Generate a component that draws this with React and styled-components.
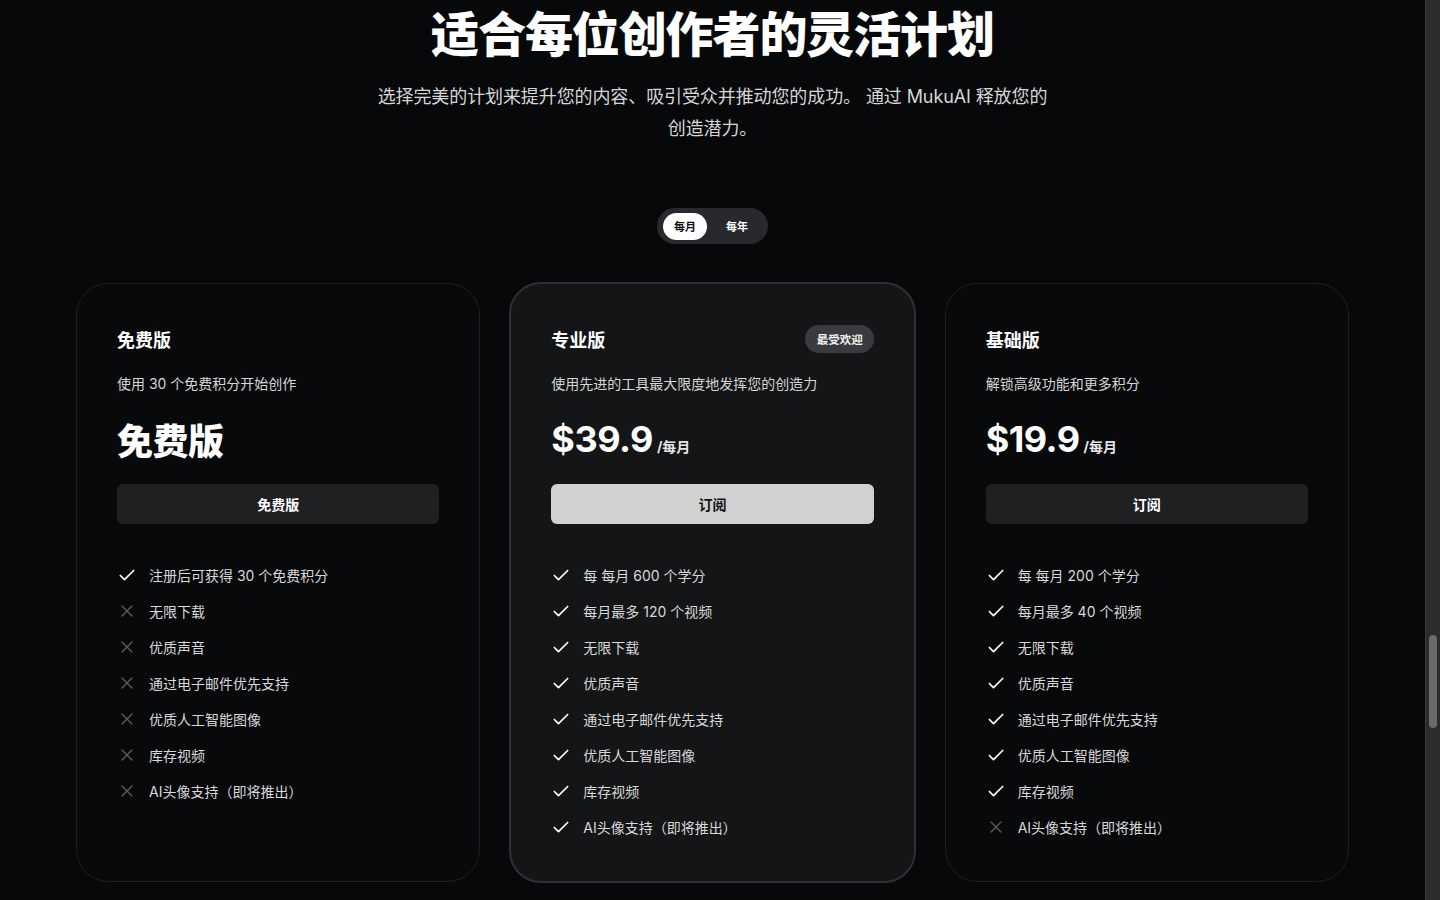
import React, { useState } from 'react'
import styled, { createGlobalStyle, css } from 'styled-components'
import { Check, X } from 'lucide-react'

const GlobalStyle = createGlobalStyle`
    html, body {
        margin: 0;
        padding: 0;
        background: #07080a;
        font-family: Inter, "Noto Sans CJK SC", "Noto Sans", sans-serif;
        color: #fff;
        -webkit-font-smoothing: antialiased;
    }
    * { box-sizing: border-box; }
`

const plans = [
    {
        name: '免费版',
        desc: '使用 30 个免费积分开始创作',
        price: '免费版',
        button: '免费版',
        features: [
            ['注册后可获得 30 个免费积分', true],
            ['无限下载', false],
            ['优质声音', false],
            ['通过电子邮件优先支持', false],
            ['优质人工智能图像', false],
            ['库存视频', false],
            ['AI头像支持（即将推出）', false],
        ],
    },
    {
        name: '专业版',
        desc: '使用先进的工具最大限度地发挥您的创造力',
        price: '$39.9',
        unit: '/每月',
        button: '订阅',
        featured: true,
        features: [
            ['每 每月 600 个学分', true],
            ['每月最多 120 个视频', true],
            ['无限下载', true],
            ['优质声音', true],
            ['通过电子邮件优先支持', true],
            ['优质人工智能图像', true],
            ['库存视频', true],
            ['AI头像支持（即将推出）', true],
        ],
    },
    {
        name: '基础版',
        desc: '解锁高级功能和更多积分',
        price: '$19.9',
        unit: '/每月',
        button: '订阅',
        features: [
            ['每 每月 200 个学分', true],
            ['每月最多 40 个视频', true],
            ['无限下载', true],
            ['优质声音', true],
            ['通过电子邮件优先支持', true],
            ['优质人工智能图像', true],
            ['库存视频', true],
            ['AI头像支持（即将推出）', false],
        ],
    },
]

const App = () => {
    const [period, setPeriod] = useState('month')

    return (
        <Viewport>
            <GlobalStyle />
            <Main>
                <Heading>适合每位创作者的灵活计划</Heading>
                <Subtitle>
                    选择完美的计划来提升您的内容、吸引受众并推动您的成功。 通过 MukuAI 释放您的创造潜力。
                </Subtitle>
                <Toggle>
                    <ToggleOption active={period === 'month'} onClick={() => setPeriod('month')}>
                        每月
                    </ToggleOption>
                    <ToggleOption active={period === 'year'} onClick={() => setPeriod('year')}>
                        每年
                    </ToggleOption>
                </Toggle>
                <Cards>
                    {plans.map((plan) => (
                        <Card key={plan.name} featured={plan.featured}>
                            <CardHeader>
                                <PlanName>{plan.name}</PlanName>
                                {plan.featured && <Badge>最受欢迎</Badge>}
                            </CardHeader>
                            <PlanDesc>{plan.desc}</PlanDesc>
                            <PriceRow>
                                <Price cjk={!plan.unit}>{plan.price}</Price>
                                {plan.unit && <Unit>{plan.unit}</Unit>}
                            </PriceRow>
                            <PlanButton featured={plan.featured}>{plan.button}</PlanButton>
                            <Features>
                                {plan.features.map(([text, ok]) => (
                                    <Feature key={text}>
                                        <IconBox ok={ok}>
                                            {ok ? <Check size={21} strokeWidth={2} /> : <X size={22} strokeWidth={1.6} />}
                                        </IconBox>
                                        {text}
                                    </Feature>
                                ))}
                            </Features>
                        </Card>
                    ))}
                </Cards>
            </Main>
            <ScrollTrack>
                <ScrollThumb />
            </ScrollTrack>
        </Viewport>
    )
}

export default App

const Viewport = styled.div`
    display: flex;
    height: 100vh;
    overflow: hidden;
    background: #07080a;
`
const Main = styled.main`
    flex: 1;
    display: flex;
    flex-direction: column;
    align-items: center;
    padding: 0 76px;
`
const Heading = styled.h1`
    margin: 0;
    font-family: "Noto Sans CJK SC", sans-serif;
    font-size: 48px;
    font-weight: 900;
    line-height: 62px;
    letter-spacing: -1.1px;
    color: #fff;
`
const Subtitle = styled.p`
    margin: 19px 0 0;
    max-width: 680px;
    text-align: center;
    font-family: Inter, "Noto Sans CJK SC", sans-serif;
    font-size: 18px;
    line-height: 32px;
    letter-spacing: -0.1px;
    color: #d6d6d6;
`
const Toggle = styled.div`
    display: flex;
    align-items: center;
    gap: 4px;
    margin-top: 63px;
    padding: 4px 6px;
    height: 36px;
    border-radius: 18px;
    background: #28292c;
`
const ToggleOption = styled.button`
    border: 0;
    height: 27px;
    padding: 0 11px 1px;
    border-radius: 14px;
    font-family: "Noto Sans CJK SC", sans-serif;
    font-size: 11px;
    font-weight: 700;
    cursor: pointer;
    ${({ active }) =>
        active
            ? css`
                  background: #fff;
                  color: #111;
              `
            : css`
                  background: transparent;
                  color: #fff;
                  padding: 0 14px 1px 15px;
              `}
`
const Cards = styled.div`
    display: grid;
    grid-template-columns: repeat(3, 1fr);
    gap: 30px;
    width: 100%;
    max-width: 1273px;
    margin-top: 39px;
`
const Card = styled.div`
    display: flex;
    flex-direction: column;
    padding: 41px 40px 44px;
    border-radius: 32px;
    border: 1px solid #1e1f22;
    background: #08090b;
    ${({ featured }) =>
        featured &&
        css`
            background: #141517;
            border: 2px solid #2f3033;
            margin: -1px -1px;
            padding: 41px 40px 44px;
        `}
`
const CardHeader = styled.div`
    display: flex;
    align-items: center;
    justify-content: space-between;
    height: 28px;
`
const PlanName = styled.h3`
    margin: 0;
    font-family: "Noto Sans CJK SC", sans-serif;
    font-size: 18px;
    font-weight: 700;
    color: #fff;
`
const Badge = styled.span`
    display: inline-flex;
    align-items: center;
    height: 28px;
    padding: 0 11px 0 12px;
    border-radius: 14px;
    background: #3a3b3e;
    font-family: "Noto Sans CJK SC", sans-serif;
    font-size: 11.5px;
    font-weight: 700;
    color: #f2f2f2;
`
const PlanDesc = styled.p`
    margin: 21px 0 0;
    font-size: 14px;
    line-height: 20px;
    color: #d6d6d6;
`
const PriceRow = styled.div`
    display: flex;
    align-items: baseline;
    gap: 4px;
    margin-top: 23px;
    height: 44px;
`
const Price = styled.span`
    font-family: ${({ cjk }) => (cjk ? '"Noto Sans CJK SC", sans-serif' : 'Inter, sans-serif')};
    font-size: 36px;
    font-weight: ${({ cjk }) => (cjk ? 900 : 700)};
    line-height: 44px;
    letter-spacing: -0.5px;
    color: #fff;
`
const Unit = styled.span`
    font-family: Inter, "Noto Sans CJK SC", sans-serif;
    font-size: 14px;
    font-weight: 700;
    color: #e4e4e4;
`
const PlanButton = styled.button`
    margin-top: 23px;
    height: 40px;
    width: 100%;
    border: 0;
    border-radius: 6px;
    font-family: "Noto Sans CJK SC", sans-serif;
    font-size: 14px;
    font-weight: 700;
    cursor: pointer;
    background: ${({ featured }) => (featured ? '#d1d1d1' : '#1f2022')};
    color: ${({ featured }) => (featured ? '#141414' : '#fff')};
`
const Features = styled.ul`
    list-style: none;
    margin: 41px 0 0;
    padding: 0;
    display: flex;
    flex-direction: column;
    gap: 16px;
`
const Feature = styled.li`
    display: flex;
    align-items: center;
    gap: 12px;
    height: 20px;
    font-size: 14px;
    color: #d8d8d8;
`
const IconBox = styled.span`
    display: inline-flex;
    align-items: center;
    justify-content: center;
    width: 20px;
    color: ${({ ok }) => (ok ? '#fff' : '#5a5b5e')};
`
const ScrollTrack = styled.div`
    flex: 0 0 15px;
    background: #2c2c2c;
    border-left: 1px solid #3c3c3c;
    padding: 635px 3px 0 3px;
`
const ScrollThumb = styled.div`
    height: 93px;
    border-radius: 4px;
    background: #6b6b6b;
`
